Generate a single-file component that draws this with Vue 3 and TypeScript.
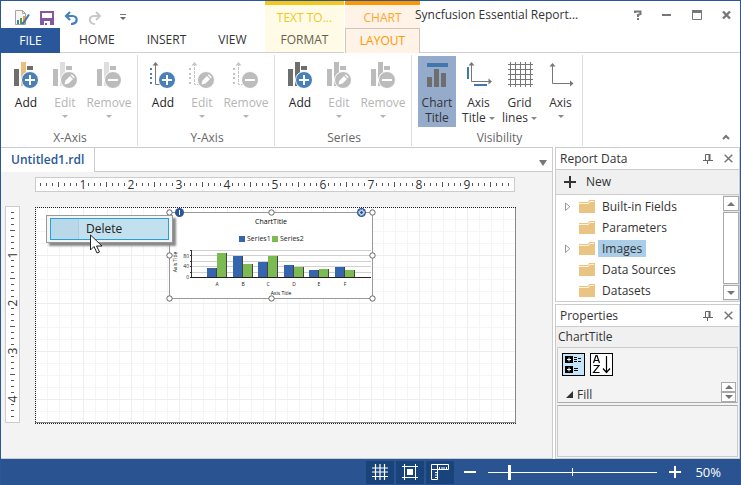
<script setup lang="ts">
import { ref } from 'vue'

type Action = 'Add' | 'Edit' | 'Remove'

interface AxisGroup {
  title: string
  axis: boolean
  accent: string
}

interface TreeItem {
  label: string
  expandable: boolean
}

const tabs: string[] = ['HOME', 'INSERT', 'VIEW']
const actions: Action[] = ['Add', 'Edit', 'Remove']
const groups: AxisGroup[] = [
  { title: 'X-Axis', axis: false, accent: '#e8bf7c' },
  { title: 'Y-Axis', axis: true, accent: '#4a80b8' },
  { title: 'Series', axis: false, accent: '#6e6e6e' },
]

const tree: TreeItem[] = [
  { label: 'Built-in Fields', expandable: true },
  { label: 'Parameters', expandable: false },
  { label: 'Images', expandable: true },
  { label: 'Data Sources', expandable: false },
  { label: 'Datasets', expandable: false },
]
const selected = ref('Images')
const zoom = ref(12)

// Rulers: one inch is 48 units, with a tick every eighth of an inch.
const range = (n: number): number[] => Array.from({ length: n }, (_, i) => i + 1)
const hTicks = range(79).filter((i) => i % 8 !== 0)
const vTicks = range(35).filter((i) => i % 8 !== 0)
const hNumbers = range(9)
const vNumbers = range(4)

const categories = [
  { name: 'A', one: 9, two: 24 },
  { name: 'B', one: 21, two: 13 },
  { name: 'C', one: 15, two: 21 },
  { name: 'D', one: 12, two: 10 },
  { name: 'E', one: 7, two: 8 },
  { name: 'F', one: 10, two: 7 },
]
const barX = (i: number): number => 44 + Math.round(i * 25.5)
const plotLines = [44, 49, 55, 60, 66]
const handles = [
  [6, 6], [108, 6], [209, 6],
  [6, 49], [209, 49],
  [6, 92], [108, 92], [209, 92],
]
</script>

<template>
  <div class="window">
    <header class="header">
      <div class="quick">
        <svg width="16" height="18" viewBox="0 0 16 18" aria-hidden="true">
          <path d="M1.5 1.5h7l3 3v11h-10z" fill="#f6f6f6" stroke="#a5a5a5" />
          <path d="M8.500 1.500v3h3" fill="none" stroke="#a5a5a5" />
          <path d="M3 11h2v4h-2z" fill="#3f7fb5" />
          <path d="M6 9h2v6h-2z" fill="#5a9c3f" />
          <path d="M9 7h2v8h-2z" fill="#e8a040" />
          <path d="M15 5.500L10 13l-2 2" fill="none" stroke="#4277ac" stroke-width="2" />
        </svg>
        <button class="tool" aria-label="Save">
          <svg width="14" height="14" viewBox="0 0 14 14"><path d="M0 0h14v14H0zM2 2v5h10V2zM4 10v4h1v-2h2v2h3v-4z" fill="#8655a3" fill-rule="evenodd" /></svg>
        </button>
        <button class="tool" aria-label="Undo">
          <svg width="14" height="14" viewBox="0 0 14 14"><path d="M6 1L2 5l4 4M2 5h6.500c6 0 5.500 8-1.500 8" fill="none" stroke="#4580b8" stroke-width="2.200" /></svg>
        </button>
        <button class="tool" aria-label="Redo">
          <svg width="14" height="14" viewBox="0 0 14 14"><path d="M8 1l4 4-4 4M12 5H6c-6 0-5.500 8 1 8" fill="none" stroke="#c9c9c9" stroke-width="2" /></svg>
        </button>
        <button class="tool more" aria-label="Customize toolbar">
          <svg width="6" height="7" viewBox="0 0 6 7"><path d="M0 .5h6" stroke="#777" /><path d="M0 3h6L3 6z" fill="#666" /></svg>
        </button>
      </div>
      <nav class="tabs">
        <button class="file">FILE</button>
        <button v-for="t in tabs" :key="t" class="tab">{{ t }}</button>
      </nav>
      <section class="context yellow">
        <span class="context-name">TEXT TO...</span>
        <button class="context-tab">FORMAT</button>
      </section>
      <section class="context orange">
        <span class="context-name">CHART</span>
        <button class="context-tab">LAYOUT</button>
      </section>
      <div class="titlebar">
        <span class="title">Syncfusion Essential Report...</span>
        <div class="window-buttons">
          <button class="tool" aria-label="Help">
            <svg width="8" height="10" viewBox="0 0 8 10"><path d="M1 3V1.500h5.500v2.500L4 5v2M4 8v2" fill="none" stroke="#777" stroke-width="2" /></svg>
          </button>
          <button class="tool" aria-label="Minimize">
            <svg width="10" height="10" viewBox="0 0 10 10"><path d="M0 5h9" stroke="#777" stroke-width="2" /></svg>
          </button>
          <button class="tool" aria-label="Maximize">
            <svg width="10" height="10" viewBox="0 0 10 10"><path d="M.5 1v8.500h9V1" fill="none" stroke="#777" /><path d="M0 1.500h10" stroke="#777" stroke-width="3" /></svg>
          </button>
          <button class="tool" aria-label="Close">
            <svg width="9" height="10" viewBox="0 0 9 10"><path d="M1 1.500l7 7M8 1.500l-7 7" stroke="#777" stroke-width="2.400" /></svg>
          </button>
        </div>
      </div>
    </header>

    <div class="ribbon">
      <section v-for="g in groups" :key="g.title" class="group">
        <div class="group-buttons">
          <button v-for="a in actions" :key="a" class="big" :class="a.toLowerCase()" :disabled="a !== 'Add'">
            <svg width="26" height="30" viewBox="0 0 26 30" aria-hidden="true">
              <template v-if="g.axis">
                <path d="M0 8h2v2H0zM0 13h2v2H0zM0 17h2v2H0zM0 22h2v2H0z" :fill="a === 'Add' ? g.accent : '#c4c4c4'" />
                <path d="M5.500 3v21.500h7" fill="none" :stroke="a === 'Add' ? '#777' : '#c4c4c4'" :stroke-dasharray="a === 'Add' ? 'none' : '3 1'" />
                <path d="M2.500 5.500L5.500 2l3 3.500z" :fill="a === 'Add' ? '#777' : '#c4c4c4'" />
              </template>
              <template v-else>
                <path d="M1 9h5v17H1z" :fill="a === 'Add' ? '#6e6e6e' : '#bcbcbc'" />
                <path d="M8 2h5v24H8z" :fill="a === 'Add' ? g.accent : g.title === 'Series' ? '#bcbcbc' : '#dedede'" />
                <path d="M14 6h6v4h-6z" :fill="a === 'Add' ? '#6e6e6e' : '#bcbcbc'" />
              </template>
              <circle cx="17" cy="20" r="8.500" :fill="a === 'Add' ? '#4a80b8' : '#bcbcbc'" stroke="#fff" />
              <path v-if="a === 'Add'" d="M17 15v10M12 20h10" stroke="#fff" stroke-width="2" />
              <path v-else-if="a === 'Remove'" d="M12 20h10" stroke="#fff" stroke-width="2" />
              <path v-else d="M12.500 24.500l1-4 4.500-4.500 3 3-4.500 4.500zM18.800 15.200l1-1 3 3-1 1z" fill="#fff" />
            </svg>
            <span>{{ a }}</span>
            <i v-if="a !== 'Add'" class="caret"></i>
          </button>
        </div>
        <h2>{{ g.title }}</h2>
      </section>

      <section class="group visibility">
        <div class="group-buttons">
          <button class="big pressed" aria-pressed="true">
            <svg width="26" height="30" viewBox="0 0 26 30" aria-hidden="true">
              <path d="M3 3h21v4H3z" fill="#4277ae" />
              <path d="M3 17h5v10H3zM10 9h5v18h-5zM17 13h5v14h-5z" fill="#6e6e6e" />
            </svg>
            <span>Chart<br />Title</span>
          </button>
          <button class="big">
            <svg width="26" height="30" viewBox="0 0 26 30" aria-hidden="true">
              <path d="M5.500 3v18.500H24" fill="none" stroke="#777" />
              <path d="M2.500 5.500L5.500 2l3 3.500zM22.500 18.500l3.500 3-3.500 3z" fill="#777" />
              <path d="M1 7h2v12H1zM8 24h13v2H8z" fill="#4277ae" />
            </svg>
            <span>Axis<br />Title <i class="caret"></i></span>
          </button>
          <button class="big">
            <svg width="26" height="30" viewBox="0 0 26 30" aria-hidden="true">
              <path d="M3.500 2v25M8.500 2v25M13.500 2v25M18.500 2v25M23.500 2v25M1 4.500h25M1 9.500h25M1 14.500h25M1 19.500h25M1 24.500h25" stroke="#777" />
            </svg>
            <span>Grid<br />lines <i class="caret"></i></span>
          </button>
          <button class="big">
            <svg width="26" height="30" viewBox="0 0 26 30" aria-hidden="true">
              <path d="M4.500 4v19.500H24" fill="none" stroke="#777" />
              <path d="M1.500 6.500L4.500 3l3 3.500zM22 20.500l3.500 3-3.500 3z" fill="#777" />
            </svg>
            <span>Axis</span>
            <i class="caret"></i>
          </button>
        </div>
        <h2>Visibility</h2>
      </section>
      <button class="tool collapse" aria-label="Collapse the ribbon">
        <svg width="8" height="6" viewBox="0 0 8 6"><path d="M1 5l3-3 3 3" fill="none" stroke="#777" stroke-width="2" /></svg>
      </button>
    </div>

    <main class="workspace">
      <section class="document">
        <div class="doc-tabs">
          <button class="doc-tab">Untitled1.rdl</button>
          <button class="tool doc-list" aria-label="Open documents">
            <svg width="8" height="6" viewBox="0 0 8 6"><path d="M0 0h8L4 6z" fill="#777" /></svg>
          </button>
        </div>
        <div class="design">
          <svg class="h-ruler" width="480" height="15" viewBox="0 0 480 15" aria-hidden="true">
            <rect x=".5" y=".5" width="479" height="14" fill="#fff" stroke="#ccc" />
            <path v-for="i in hTicks" :key="i" :d="`M${i * 6 - 0.5} ${i % 4 ? 6 : 5}v${i % 4 ? 3 : 5}`" stroke="#555" />
            <text v-for="n in hNumbers" :key="n" :x="n * 48" y="12" class="number">{{ n }}</text>
          </svg>
          <svg class="v-ruler" width="15" height="217" viewBox="0 0 15 217" aria-hidden="true">
            <rect x=".5" y=".5" width="14" height="216" fill="#fff" stroke="#ccc" />
            <path v-for="i in vTicks" :key="i" :d="`M${i % 4 ? 6 : 5} ${i * 6 + 0.5}h${i % 4 ? 3 : 5}`" stroke="#555" />
            <text v-for="n in vNumbers" :key="n" :transform="`translate(12 ${n * 48 + 1}) rotate(-90)`" class="number">{{ n }}</text>
          </svg>
          <div class="page">
            <svg width="481" height="217" viewBox="0 0 481 217" aria-hidden="true">
              <defs>
                <pattern id="minor" width="12" height="12" patternUnits="userSpaceOnUse">
                  <path d="M.5 0v12M0 .5h12" stroke="#f5f5f5" />
                </pattern>
                <pattern id="major" width="48" height="48" patternUnits="userSpaceOnUse">
                  <path d="M.5 0v48M0 .5h48" stroke="#eee" />
                </pattern>
              </defs>
              <rect width="481" height="216" fill="#fff" />
              <rect width="481" height="216" fill="url(#minor)" />
              <rect width="481" height="216" fill="url(#major)" />
              <path d="M480.500 0v216M0 215.500h481" stroke="#888" />
              <path d="M0 .5h481M.5 0v216M0 216.500h481" stroke="#222" stroke-dasharray="1 1" />
            </svg>

            <svg class="chart" width="215" height="98" viewBox="0 0 215 98" role="img" aria-label="ChartTitle">
              <rect x="6.500" y="6.500" width="203" height="86" fill="#fff" stroke="#999" />
              <text x="108" y="18" class="chart-title">ChartTitle</text>
              <path d="M76 30h6v6h-6z" fill="#3465ae" />
              <text x="84" y="35" class="legend">Series1</text>
              <path d="M109 30h6v6h-6z" fill="#7cba52" />
              <text x="117" y="35" class="legend">Series2</text>
              <path v-for="y in plotLines" :key="y" :d="`M28 ${y + 0.5}h180`" stroke="#d0d0d0" />
              <path d="M28.500 44v28M27 44.500h2M27 49.500h2M27 55.500h2M27 60.500h2M27 66.500h2M27 71.500h2" stroke="#333" fill="none" />
              <text x="26" y="52" class="tick">80</text>
              <text x="26" y="62" class="tick">40</text>
              <text x="26" y="73" class="tick">0</text>
              <g v-for="(c, i) in categories" :key="c.name">
                <rect :x="barX(i)" :y="71 - c.one" width="10" :height="c.one" fill="#3465ae" />
                <rect :x="barX(i) + 9" :y="71 - c.one" width="1" :height="c.one" fill="#444" />
                <rect :x="barX(i) + 10" :y="71 - c.two" width="10" :height="c.two" fill="#7cba52" />
                <rect :x="barX(i) + 19" :y="71 - c.two" width="1" :height="c.two" fill="#444" />
                <text :x="barX(i) + 10" y="80" class="category">{{ c.name }}</text>
              </g>
              <path d="M28 71.500h180" stroke="#222" />
              <text x="118" y="89" class="axis-title">Axis Title</text>
              <text transform="translate(14 56) rotate(-90)" class="axis-title">Axis Title</text>
              <circle v-for="(p, i) in handles" :key="i" :cx="p[0] + 0.5" :cy="p[1] + 0.5" r="2.700" fill="#fff" stroke="#666" />
              <circle cx="16.500" cy="6.500" r="4.500" fill="#2a5699" />
              <path d="M16.500 4v5" stroke="#fff" />
              <circle cx="198.500" cy="6.500" r="4.500" fill="#2a5699" />
              <circle cx="198.500" cy="6.500" r="2" fill="none" stroke="#fff" />
              <circle cx="198.500" cy="6.500" r="3" fill="none" stroke="#fff" stroke-dasharray="1 1.350" />
            </svg>

            <div class="menu" role="menu">
              <button role="menuitem" class="menu-item">Delete</button>
            </div>
            <svg class="pointer" width="13" height="20" viewBox="0 0 13 20" aria-hidden="true">
              <path d="M.5 1v15l3.500-3.500 3 6.500 2.500-1-3-6H12z" fill="#fff" stroke="#222" />
            </svg>
          </div>
        </div>
      </section>

      <aside class="side">
        <section class="panel">
          <header class="panel-head">
            <h2>Report Data</h2>
            <button class="tool" aria-label="Pin Report Data">
              <svg width="10" height="10" viewBox="0 0 10 10"><path d="M2.500 6V.5h4V6M0 6.500h10M4.500 7v3" fill="none" stroke="#666" /><path d="M6.500 0v6" stroke="#666" stroke-width="2" /></svg>
            </button>
            <button class="tool" aria-label="Close Report Data">
              <svg width="9" height="9" viewBox="0 0 9 9"><path d="M.7.7l7.600 7.600M8.300.7L.7 8.300" stroke="#777" stroke-width="1.500" /></svg>
            </button>
          </header>
          <button class="new">
            <svg width="12" height="12" viewBox="0 0 12 12" aria-hidden="true"><path d="M6 0v12M0 6h12" stroke="#333" stroke-width="2" /></svg>
            New
          </button>
          <div class="tree-box">
            <ul class="tree">
              <li v-for="item in tree" :key="item.label">
                <button v-if="item.expandable" class="tool expander" :aria-label="`Expand ${item.label}`">
                  <svg width="6" height="10" viewBox="0 0 6 10"><path d="M.5 1v7.500L4.800 4.700z" fill="#fff" stroke="#999" /></svg>
                </button>
                <span v-else class="expander"></span>
                <svg width="16" height="14" viewBox="0 0 16 14" aria-hidden="true"><path d="M0 2h9l1-2h6v13H0z" fill="#e9c482" /><path d="M0 3.500h9.500l1-2h4.500" fill="none" stroke="#fff3dc" /></svg>
                <button class="node" :class="{ selected: selected === item.label }" @click="selected = item.label">{{ item.label }}</button>
              </li>
            </ul>
            <div class="scrollbar">
              <button aria-label="Scroll up"><i class="up"></i></button>
              <span class="thumb"></span>
              <button aria-label="Scroll down"><i class="down"></i></button>
            </div>
          </div>
        </section>

        <section class="panel properties">
          <header class="panel-head">
            <h2>Properties</h2>
            <button class="tool" aria-label="Pin Properties">
              <svg width="10" height="10" viewBox="0 0 10 10"><path d="M2.500 6V.5h4V6M0 6.500h10M4.500 7v3" fill="none" stroke="#666" /><path d="M6.500 0v6" stroke="#666" stroke-width="2" /></svg>
            </button>
            <button class="tool" aria-label="Close Properties">
              <svg width="9" height="9" viewBox="0 0 9 9"><path d="M.7.7l7.600 7.600M8.300.7L.7 8.300" stroke="#777" stroke-width="1.500" /></svg>
            </button>
          </header>
          <p class="object">ChartTitle</p>
          <div class="grid-box">
            <div class="sorters">
              <button class="sort on" aria-label="Categorized">
                <svg width="21" height="21" viewBox="0 0 21 21"><path d="M2 2h8v7H2zM2 12h8v7H2z" fill="#000" /><path d="M6 3.500v4M4 5.500h4M6 13.500v4M4 15.500h4" stroke="#fff" /><path d="M11 3.500h3M11 5.500h3M11 7.500h3M15 4.500h3M15 7.500h3M11 14.500h4M11 16.500h4" stroke="#000" /></svg>
              </button>
              <button class="sort" aria-label="Alphabetical">
                <svg width="21" height="21" viewBox="0 0 21 21"><path d="M2.500 9l2.500-7.500h1L8.500 9M3 6.500h5M2.500 11.500h5.500l-5.500 7H8.500M15.500 2v16M12 14.500l3.500 4 3.500-4" fill="none" stroke="#000" stroke-width="1.200" /></svg>
              </button>
            </div>
            <div class="category-row">
              <button class="fill">
                <svg width="8" height="8" viewBox="0 0 8 8" aria-hidden="true"><path d="M7 0v7H0z" fill="#333" /></svg>
                Fill
              </button>
              <div class="spin">
                <button aria-label="Scroll up"><i class="up"></i></button>
                <button aria-label="Scroll down"><i class="down"></i></button>
              </div>
            </div>
          </div>
          <div class="description"></div>
        </section>
      </aside>
    </main>

    <footer class="status">
      <button class="toggle" aria-label="Show grid">
        <svg width="16" height="16" viewBox="0 0 16 16"><path d="M3.500 0v16M8 0v16M12.500 0v16M0 4h16M0 8h16M0 12.500h16" stroke="#fff" stroke-width="1.200" /></svg>
      </button>
      <button class="toggle" aria-label="Snap to grid">
        <svg width="16" height="16" viewBox="0 0 16 16"><path d="M2.500 0v16M13.500 0v16M0 2.500h16M0 13.500h16" stroke="#fff" /><path d="M5 5h6v6H5z" fill="#fff" /></svg>
      </button>
      <button class="toggle" aria-label="Show rulers">
        <svg width="18" height="16" viewBox="0 0 18 16"><path d="M.5.5h17v5H6.500v10h-6zM.5 5.500h6M6.500.5v5M8.500 3v2M11 3v2M13 3v2M15.500 3v2M4 8.500h2M4 11h2M4 13.500h2" fill="none" stroke="#fff" /></svg>
      </button>
      <button class="zoom-step" aria-label="Zoom out">
        <svg width="12" height="12" viewBox="0 0 12 12"><path d="M0 6h12" stroke="#fff" stroke-width="2" /></svg>
      </button>
      <input v-model.number="zoom" class="slider" type="range" min="0" max="100" aria-label="Zoom" />
      <button class="zoom-step" aria-label="Zoom in">
        <svg width="12" height="12" viewBox="0 0 12 12"><path d="M0 6h12M6 0v12" stroke="#fff" stroke-width="2" /></svg>
      </button>
      <output class="percent">50%</output>
    </footer>
  </div>
</template>

<style>
body {
  background: #fff;
}
</style>

<style scoped>
.window {
  box-sizing: border-box;
  display: flex;
  flex-direction: column;
  min-height: 100vh;
  border: 1px solid #2a579a;
  border-bottom: 0;
  background: #fff;
  color: #333;
  font: 12px/14px "Open Sans", "Noto Sans", sans-serif;
}
.window *,
.window *::before {
  box-sizing: border-box;
}
button {
  margin: 0;
  padding: 0;
  border: 0;
  background: none;
  color: inherit;
  font: inherit;
}
h2,
p,
ul {
  margin: 0;
  padding: 0;
  font: inherit;
  list-style: none;
}
svg {
  display: block;
  flex: none;
}
.tool {
  display: flex;
  align-items: center;
  justify-content: center;
}

/* Title bar and ribbon tabs */
.header {
  display: grid;
  grid-template: 27px 25px / 264px 79px 1px 70px 5px 1fr;
}
.quick {
  grid-area: 1 / 1;
  display: flex;
  align-items: center;
  gap: 10px;
  padding: 6px 0 0 13px;
}
.more {
  margin-left: 8px;
}
.tabs {
  grid-area: 2 / 1;
  display: flex;
  border-bottom: 1px solid #d0d0d0;
}
.file {
  width: 59px;
  height: 25px;
  margin-right: 2px;
  background: #2a579a;
  color: #fff;
}
.tab {
  padding: 0 15px 0 17px;
}
.context {
  display: grid;
  grid-template-rows: 27px 25px;
  text-align: center;
}
.context-name {
  padding-top: 6px;
  border-top: 4px solid;
}
.yellow {
  grid-area: 1 / 2 / 3 / 3;
  background: #fffbe6;
}
.orange {
  grid-area: 1 / 4 / 3 / 6;
  background: #fef3e6;
}
.yellow .context-name {
  border-color: #f5c71a;
  color: #f5c71a;
}
.orange .context-name {
  border-color: #ff9800;
  color: #ffa62b;
}
.context-tab {
  border-bottom: 1px solid #d0d0d0;
  color: #665f4c;
}
.orange .context-tab {
  border: 1px solid #d3c6b8;
  border-bottom: 0;
  color: #ff9800;
}
.titlebar {
  grid-area: 1 / 5 / 2 / 7;
  display: flex;
  align-items: center;
  justify-content: space-between;
  white-space: nowrap;
}
.header::after {
  content: "";
  grid-area: 2 / 6;
  border-bottom: 1px solid #d0d0d0;
}
.window-buttons {
  display: flex;
  gap: 20px;
  padding-right: 9px;
}

/* Ribbon */
.ribbon {
  display: flex;
  height: 94px;
  padding: 2px 0 1px;
}
.group {
  display: flex;
  flex-direction: column;
  justify-content: space-between;
  padding: 1px 2px 1px 4px;
  border-right: 1px solid #ddd;
}
.group h2 {
  color: #666;
  text-align: center;
}
.group-buttons {
  display: flex;
}
.big {
  display: flex;
  flex-direction: column;
  align-items: center;
  gap: 5px;
  width: 41px;
  height: 71px;
  padding-top: 4px;
  line-height: 15px;
}
.big.add {
  width: 42px;
  color: #222;
}
.big.edit {
  width: 36px;
}
.big.remove {
  width: 52px;
}
.big:disabled {
  color: #b5b5b5;
}
.visibility {
  padding: 1px 1px 1px 6px;
}
.pressed {
  width: 38px;
  margin-right: 2px;
  background: #95abcc;
}
.caret {
  display: inline-block;
  border: 3px solid transparent;
  border-top-color: #888;
  border-bottom: 0;
  vertical-align: middle;
}
.big:disabled .caret {
  border-top-color: #b5b5b5;
}
.collapse {
  align-self: flex-end;
  margin: 0 10px 6px auto;
}

/* Document */
.workspace {
  display: flex;
  flex: 1;
  gap: 2px;
}
.document {
  display: flex;
  flex: 1;
  flex-direction: column;
  border: 1px solid #ccc;
  border-left: 0;
}
.doc-tabs {
  display: flex;
  height: 24px;
  border-bottom: 1px solid #ccc;
}
.doc-tab {
  height: 24px;
  padding: 0 10px;
  border-right: 1px solid #ccc;
  background: #fff;
  color: #2a579a;
  font-weight: 600;
}
.doc-list {
  margin: 6px 5px 0 auto;
}
.design {
  display: grid;
  flex: 1;
  grid-template: 15px 218px / 15px 481px;
  align-content: start;
  gap: 14px 15px;
  padding: 5px 0 0 4px;
  background: #f3f3f3;
}
.h-ruler {
  grid-area: 1 / 2;
}
.v-ruler {
  grid-area: 2 / 1;
}
.number {
  fill: #333;
  font: 12px "Open Sans", "Noto Sans", sans-serif;
  text-anchor: middle;
}
.page {
  grid-area: 2 / 2;
  position: relative;
  padding-top: 1px;
}
.chart {
  position: absolute;
  left: 128px;
  top: 0;
}
.chart text {
  fill: #222;
  font-family: "Open Sans", "Noto Sans", sans-serif;
  font-size: 6px;
  text-anchor: middle;
}
.chart .chart-title {
  fill: #000;
  font-size: 7px;
}
.chart .legend {
  font-size: 7px;
  text-anchor: start;
}
.chart .axis-title {
  fill: #000;
  font-size: 5px;
}
.chart .tick {
  font-size: 5px;
  text-anchor: end;
}
.chart .category {
  font-size: 5px;
}
.menu {
  position: absolute;
  left: 11px;
  top: 9px;
  width: 127px;
  padding: 2px 3px;
  border: 1px solid #999;
  background: #f5f5f5;
  box-shadow: 3px 3px 2px #888;
}
.menu-item {
  display: block;
  width: 100%;
  height: 22px;
  padding-left: 35px;
  border: 1px solid #26a0da;
  background: linear-gradient(90deg, #b9d9e8 27px, #a8cfe0 27px 28px, #c3e0ee 28px);
  color: #222;
  text-align: left;
}
.pointer {
  position: absolute;
  left: 55px;
  top: 28px;
}

/* Side panels */
.side {
  display: flex;
  flex-direction: column;
  gap: 2px;
  width: 185px;
}
.panel {
  border: 1px solid #ccc;
}
.panel-head {
  display: flex;
  align-items: center;
  gap: 11px;
  height: 22px;
  padding: 0 6px 0 4px;
  border-bottom: 1px solid #ccc;
}
.panel-head h2 {
  flex: 1;
}
.new {
  display: flex;
  align-items: center;
  gap: 10px;
  width: 100%;
  height: 25px;
  padding-left: 8px;
  border-bottom: 1px solid #ccc;
  background: #f0f0f0;
}
.tree-box {
  display: flex;
}
.tree {
  flex: 1;
  padding-top: 1px;
}
.tree li {
  display: flex;
  align-items: center;
  height: 21px;
  padding-left: 9px;
}
.expander {
  width: 14px;
  padding-right: 8px;
}
.node {
  height: 17px;
  margin-left: 3px;
  padding: 0 4px;
}
.selected {
  background: #aacde8;
}
.scrollbar {
  display: flex;
  flex-direction: column;
  gap: 1px;
  width: 16px;
  padding: 1px 0;
  background: #e8e8e8;
}
.scrollbar button,
.spin button {
  display: flex;
  align-items: center;
  justify-content: center;
  height: 15px;
  border: 1px solid #aaa;
  background: #fff;
}
.thumb {
  flex: 1;
  border: 1px solid #aaa;
  background: #fff;
}
.up,
.down {
  border: 4px solid transparent;
}
.up {
  border-top: 0;
  border-bottom-color: #777;
}
.down {
  border-bottom: 0;
  border-top-color: #777;
}
.properties {
  display: flex;
  flex: 1;
  flex-direction: column;
  background: #f3f3f3;
}
.properties .panel-head {
  background: #fff;
}
.object {
  height: 20px;
  padding: 3px 2px;
  background: #f0f0f0;
}
.grid-box {
  margin: 0 1px;
  border: 1px solid #ccc;
  border-bottom-color: #aaa;
}
.sorters {
  display: flex;
  gap: 5px;
  padding: 5px 4px 4px;
}
.sort {
  padding: 0;
  border: 1px solid #000;
  background: #fff;
}
.sort.on {
  background: #c5e5f8;
}
.category-row {
  display: flex;
  align-items: flex-end;
  justify-content: space-between;
  height: 22px;
  padding: 0 1px 0 8px;
}
.fill {
  display: flex;
  align-items: center;
  gap: 3px;
}
.spin {
  width: 15px;
}
.spin button {
  width: 100%;
  height: 10px;
}
.description {
  flex: 1;
  margin: 2px 1px 1px;
  border: 1px solid #ccc;
  border-top-color: #aaa;
}

/* Status bar */
.status {
  display: flex;
  align-items: center;
  justify-content: flex-end;
  gap: 2px;
  height: 26px;
  padding-right: 19px;
  background: #2a5391;
  color: #fff;
}
.toggle {
  display: flex;
  align-items: center;
  justify-content: center;
  width: 28px;
  height: 23px;
  background: #19437b;
}
.zoom-step {
  margin: 0 8px;
}
.slider {
  appearance: none;
  width: 169px;
  height: 16px;
  margin: 0 2px;
  background:
    linear-gradient(#fff, #fff) center / 1px 8px no-repeat,
    linear-gradient(#fff, #fff) center / 100% 1px no-repeat;
}
.slider::-webkit-slider-thumb {
  appearance: none;
  width: 3px;
  height: 15px;
  background: #fff;
}
.percent {
  margin-left: 4px;
  font-size: 13px;
}
</style>
